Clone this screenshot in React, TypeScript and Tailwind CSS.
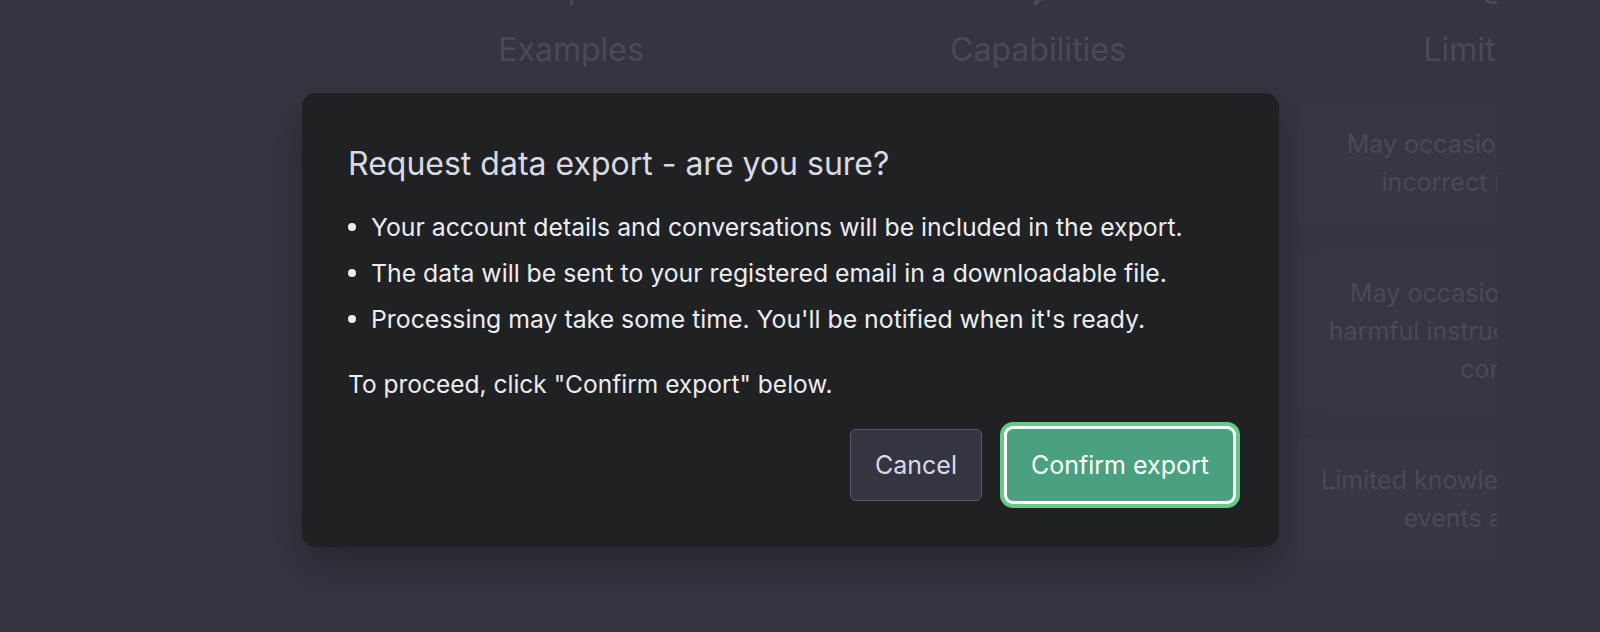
import { Sun, Zap, TriangleAlert } from "lucide-react";

const columns = [
  {
    title: "Examples",
    Icon: Sun,
    cards: [
      ["\"Explain quantum computing in", "simple terms\" →"],
      ["\"Got any creative ideas for a 10", "year old's birthday?\" →"],
      ["\"How do I make an HTTP request", "in Javascript?\" →"],
    ],
  },
  {
    title: "Capabilities",
    Icon: Zap,
    cards: [
      ["Remembers what user said", "earlier in the conversation"],
      ["Allows user to provide follow-up", "corrections"],
      ["Trained to decline inappropriate", "requests"],
    ],
  },
  {
    title: "Limitations",
    Icon: TriangleAlert,
    cards: [
      ["May occasionally generate", "incorrect information"],
      ["May occasionally produce", "harmful instructions or biased", "content"],
      ["Limited knowledge of world and", "events after 2021"],
    ],
  },
];

const bullets = [
  "Your account details and conversations will be included in the export.",
  "The data will be sent to your registered email in a downloadable file.",
  "Processing may take some time. You'll be notified when it's ready.",
];

export default function App() {
  return (
    <div className="relative h-[632px] w-[1600px] overflow-hidden bg-[#353440] font-['Inter',sans-serif]">
      {/* page behind the dialog */}
      <div className="h-full w-[1497px] overflow-hidden">
        <div className="-mt-[37px] ml-[364px] flex gap-[53px]">
          {columns.map(({ title, Icon, cards }) => (
            <div key={title} className="flex w-[414px] shrink-0 flex-col items-center">
              <Icon className="h-[45px] w-[45px] text-[#4a4a56]" strokeWidth={1.5} />
              <h2 className="mt-[16px] text-[32px] leading-[52px] text-[#4a4a56]">{title}</h2>
              <ul className="mt-[26px] flex w-full flex-col gap-[27px]">
                {cards.map((lines, i) => (
                  <li
                    key={i}
                    className="rounded-md bg-white/[0.012] px-[23px] py-[23px] text-center text-[25px] leading-[38px] text-[#4a4a56]"
                  >
                    {lines.map((l, j) => (
                      <div key={j} className="whitespace-nowrap">
                        {l}
                      </div>
                    ))}
                  </li>
                ))}
              </ul>
            </div>
          ))}
        </div>
      </div>

      {/* dialog */}
      <div className="absolute left-[302px] top-[93px] flex h-[454px] w-[977px] flex-col rounded-[14px] bg-[#202123] px-[46px] pt-[51px] shadow-[0_20px_40px_rgba(0,0,0,0.25)]">
        <h3 className="text-[32px] leading-[40px] text-[#d9d9e3]">Request data export - are you sure?</h3>
        <ul className="mt-[27px] flex flex-col gap-[14px]">
          {bullets.map((b) => (
            <li key={b} className="flex items-center gap-[15px] text-[24.8px] leading-[32px] text-[#ececf1]">
              <span className="h-[8px] w-[8px] shrink-0 rounded-full bg-[#ececf1]" />
              {b}
            </li>
          ))}
        </ul>
        <p className="mt-[33px] text-[24.5px] leading-[32px] text-[#ececf1]">
          To proceed, click "Confirm export" below.
        </p>
        <div className="mt-[29px] flex justify-end gap-[25px]">
          <button className="rounded-[6px] border border-[#565869] bg-[#343541] px-[24px] py-[19px] text-[25px] leading-[32px] text-[#d9d9e3]">
            Cancel
          </button>
          <button className="rounded-[6px] bg-[#4aa17f] px-[24px] py-[20px] text-[25px] leading-[32px] text-white ring-[4px] ring-[#66c987] ring-offset-[3px] ring-offset-white">
            Confirm export
          </button>
        </div>
      </div>
    </div>
  );
}
